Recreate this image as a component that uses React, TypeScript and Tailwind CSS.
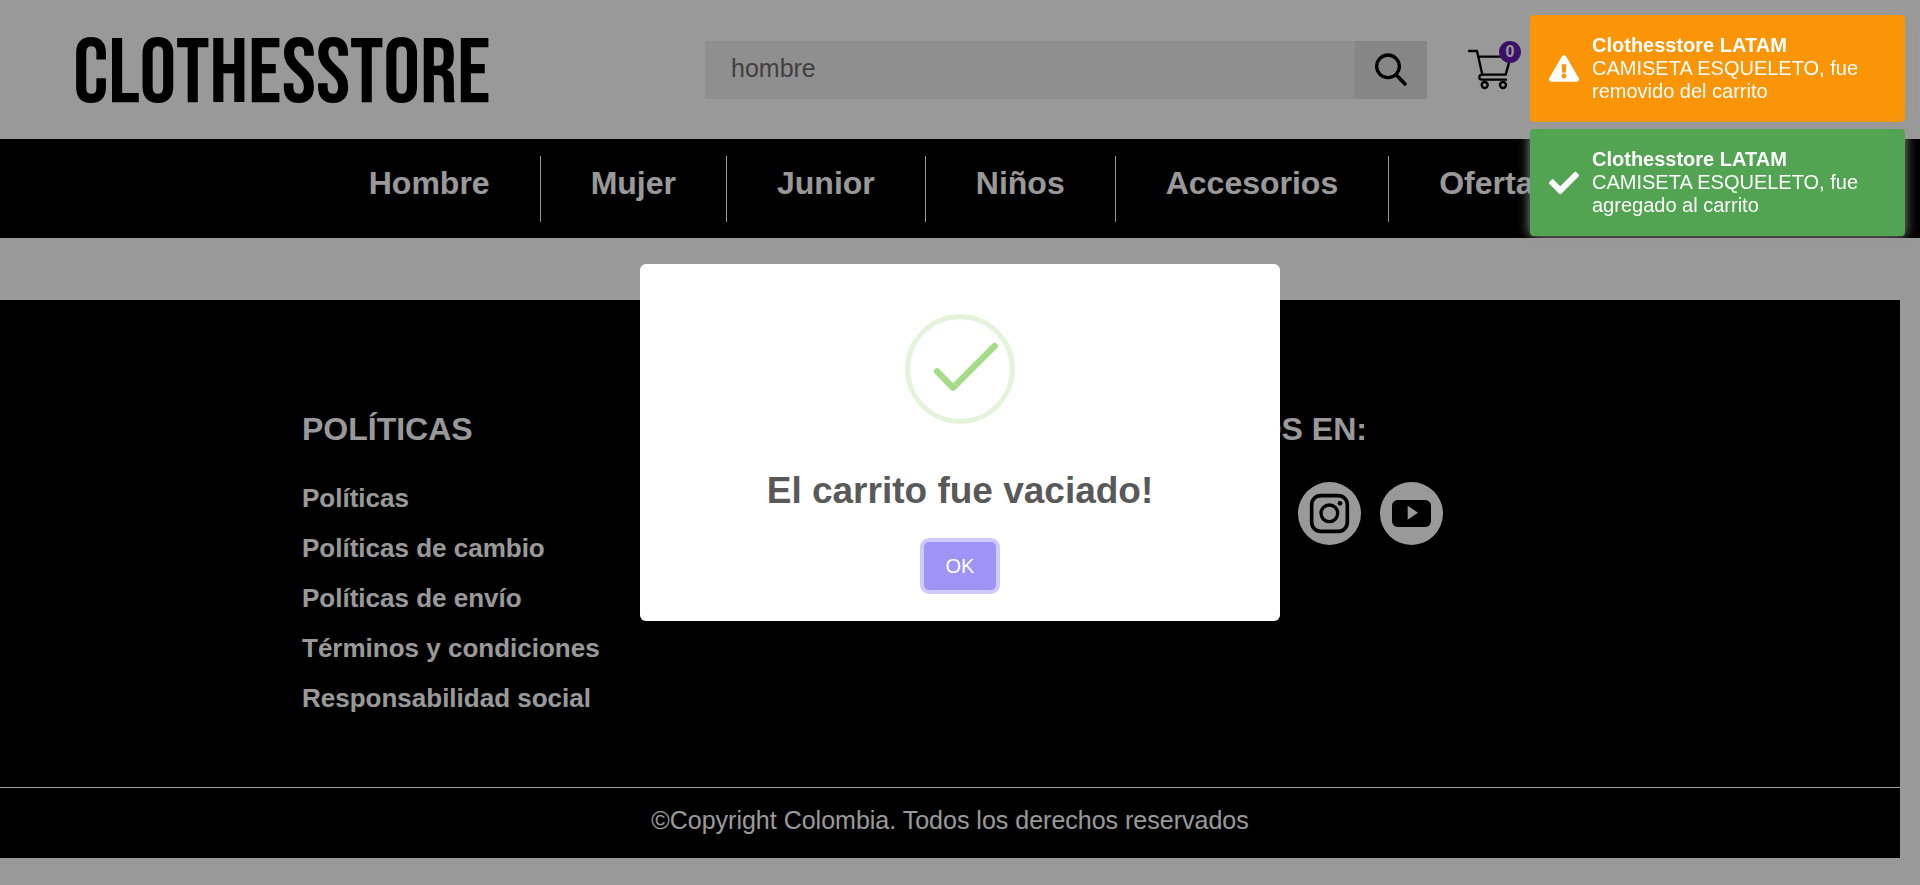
import { FaCheck, FaExclamationTriangle, FaFacebookF, FaTwitter } from "react-icons/fa";
import type { ReactNode } from "react";

const categories = ["Hombre", "Mujer", "Junior", "Niños", "Accesorios", "Ofertas"];

const policies = [
  "Políticas",
  "Políticas de cambio",
  "Políticas de envío",
  "Términos y condiciones",
  "Responsabilidad social",
];

function SearchIcon() {
  return (
    <svg className="size-9" viewBox="69 54 108 108" fill="none" stroke="#000" strokeLinecap="round" aria-hidden="true">
      <circle cx="114" cy="97" r="34" strokeWidth="10" />
      <path d="M139 123L165 150" strokeWidth="11" />
    </svg>
  );
}

function CartIcon() {
  return (
    <svg className="h-[42px] w-[45px]" viewBox="351 45 135 126" fill="none" stroke="#000" strokeWidth="7" strokeLinecap="round" strokeLinejoin="round" aria-hidden="true">
      <path d="M357 51H381L397 122H467L482 68H386" />
      <path d="M397 122H395Q388 123 388 130Q388 137 395 137H468" />
      <circle cx="404" cy="153" r="9" />
      <circle cx="459" cy="153" r="9" />
    </svg>
  );
}

function InstagramIcon() {
  return (
    <svg className="size-full" viewBox="174 276 189 189" fill="none" stroke="#000" aria-hidden="true">
      <rect x="215" y="317" width="107" height="107" rx="27" strokeWidth="11" />
      <circle cx="268" cy="370" r="25" strokeWidth="10" />
      <circle cx="300" cy="340" r="7" fill="#000" stroke="none" />
    </svg>
  );
}

function YoutubeIcon() {
  return (
    <svg className="size-full" viewBox="420 276 189 189" aria-hidden="true">
      <rect x="456" y="330" width="117" height="81" rx="17" fill="#000" />
      <path d="M503 347V389L534 368Z" fill="#fff" />
    </svg>
  );
}

function SocialLink({ label, children }: { label: string; children: ReactNode }) {
  return (
    <a href="#" aria-label={label} className="flex size-[63px] items-center justify-center rounded-full bg-white text-black">
      {children}
    </a>
  );
}

function Toast({ tone, icon, children }: { tone: string; icon: ReactNode; children: ReactNode }) {
  return (
    <div role="status" className={`flex items-center gap-[13px] rounded-[4px] px-[19px] py-[19px] text-xl leading-[23px] text-white shadow-[0_0_12px_#999999] ${tone}`}>
      {icon}
      <div>
        <p className="font-bold">Clothesstore LATAM</p>
        <p>{children}</p>
      </div>
    </div>
  );
}

export default function App() {
  return (
    <div className="min-h-screen bg-white font-['Liberation_Sans',Arial,sans-serif]">
      <header className="grid h-[139px] grid-cols-[705fr_722fr_493fr] items-center">
        <a href="#" className="pl-[73px] pt-[11px] font-['Bebas_Neue',sans-serif] text-[92px] leading-[88px] text-black">
          CLOTHESSTORE
        </a>
        <form role="search" className="flex h-[58px]" onSubmit={(e) => e.preventDefault()}>
          <input
            type="text"
            aria-label="Buscar"
            defaultValue="hombre"
            className="min-w-0 grow bg-[#eeeeee] px-[26px] pb-0.5 text-[25px] text-[#6c6c6c] outline-none"
          />
          <button type="submit" aria-label="Buscar" className="flex w-[72px] items-center justify-center bg-[#dfdfdf]">
            <SearchIcon />
          </button>
        </form>
        <div className="pl-10">
          <button type="button" aria-label="Carrito" className="relative flex">
            <CartIcon />
            <span className="absolute -top-2 left-8 flex size-[22px] items-center justify-center rounded-full bg-[#621cad] text-base font-bold text-white">
              0
            </span>
          </button>
        </div>
      </header>

      <nav className="flex h-[99px] justify-center bg-black pt-[17px]">
        {categories.map((name) => (
          <a key={name} href="#" className="h-[66px] border-r border-white px-[50px] pt-[9px] text-[32px] leading-[37px] font-bold text-white last:border-r-0">
            {name}
          </a>
        ))}
      </nav>

      <footer className="mt-[62px] mr-5 bg-black text-white">
        <div className="grid grid-cols-[302fr_832fr_766fr] pt-[109px] pb-16">
          <section className="col-start-2">
            <h2 className="text-[32px] leading-[40px] font-bold">POLÍTICAS</h2>
            <ul className="mt-6">
              {policies.map((name) => (
                <li key={name} className="text-[26px] leading-[50px] font-bold">
                  <a href="#">{name}</a>
                </li>
              ))}
            </ul>
          </section>
          <section>
            <h2 className="text-[32px] leading-[40px] font-bold">SÍGUENOS EN:</h2>
            <div className="mt-[33px] flex gap-[19px]">
              <SocialLink label="Facebook"><FaFacebookF className="size-9" /></SocialLink>
              <SocialLink label="Twitter"><FaTwitter className="size-9" /></SocialLink>
              <SocialLink label="Instagram"><InstagramIcon /></SocialLink>
              <SocialLink label="YouTube"><YoutubeIcon /></SocialLink>
            </div>
          </section>
        </div>
        <p className="border-t border-white pt-[18px] pb-6 text-center text-[25px] leading-[28px]">
          ©Copyright Colombia. Todos los derechos reservados
        </p>
      </footer>

      <div className="fixed inset-0 flex items-center justify-center bg-black/40">
        <div role="dialog" aria-modal="true" aria-labelledby="dialog-title" className="flex w-[640px] flex-col items-center rounded-[6px] bg-white pt-[50px] pb-[31px]">
          <svg className="size-[110px]" viewBox="30 30 330 330" fill="none" aria-hidden="true">
            <circle cx="195" cy="195" r="157" stroke="#e4f4db" strokeWidth="15" />
            <path d="M126 202L174 251L299 126" stroke="#a5dc86" strokeWidth="19" strokeLinecap="round" strokeLinejoin="round" />
          </svg>
          <h2 id="dialog-title" className="mt-[45px] text-[37px] leading-[43px] font-bold text-[#595959]">
            El carrito fue vaciado!
          </h2>
          <button type="button" className="mt-[30px] h-12 w-[72px] rounded-[5px] bg-[#9d94f5] text-xl text-white ring-4 ring-[#cfcafb]">
            OK
          </button>
        </div>
      </div>

      <div className="fixed top-[15px] right-[15px] flex w-[375px] flex-col gap-[7px]">
        <Toast tone="bg-[#fa9508]" icon={<FaExclamationTriangle className="h-[27px] w-[30px] shrink-0" />}>
          CAMISETA ESQUELETO, fue removido del carrito
        </Toast>
        <Toast tone="bg-[#52a452]" icon={<FaCheck className="size-[30px] shrink-0" />}>
          CAMISETA ESQUELETO, fue agregado al carrito
        </Toast>
      </div>
    </div>
  );
}
